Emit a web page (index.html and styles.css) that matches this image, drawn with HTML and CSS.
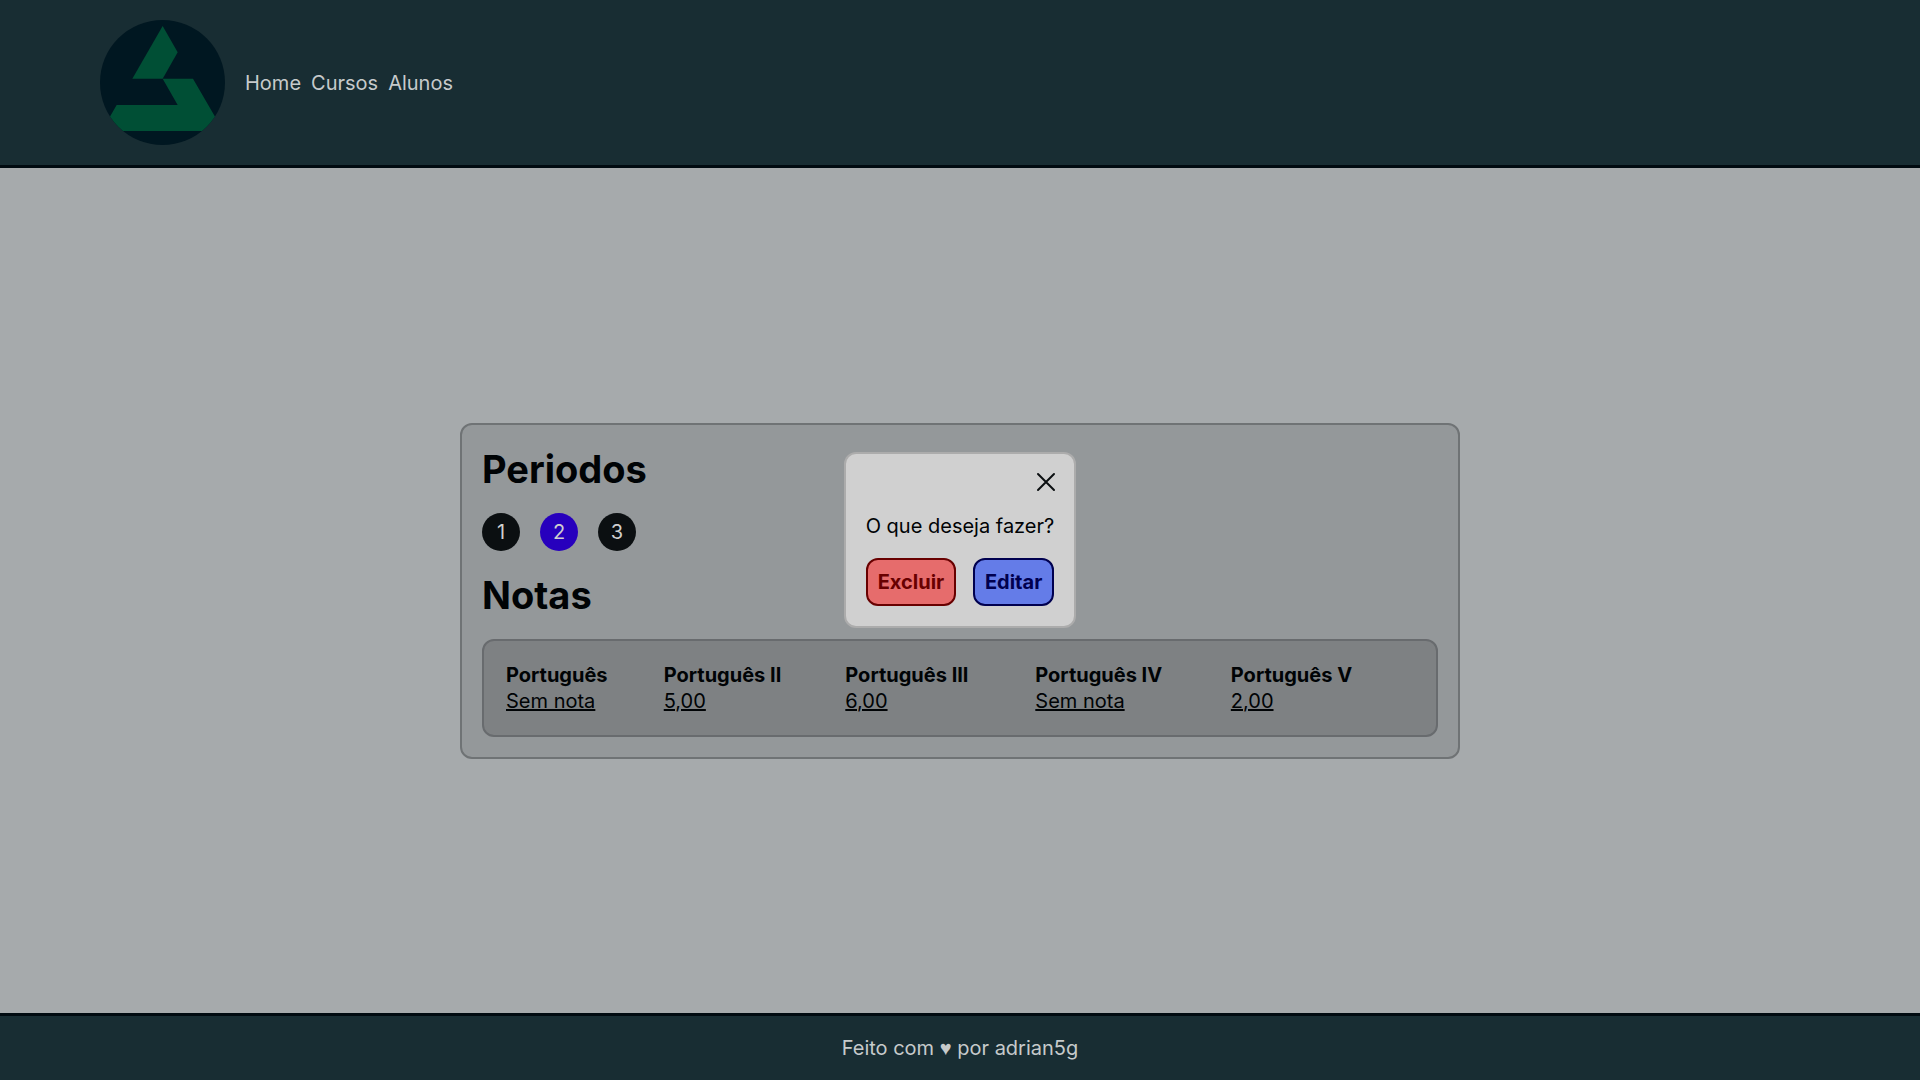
FILE: index.html
```html
<!DOCTYPE html>
<html lang="pt-BR">
<head>
  <meta charset="utf-8">
  <meta name="viewport" content="width=device-width, initial-scale=1">
  <title>Notas</title>
  <link rel="stylesheet" href="styles.css">
</head>
<body>
  <header class="header">
    <svg class="logo" viewBox="0 0 375 375" role="img" aria-label="Logo">
      <clipPath id="disc"><circle cx="187.5" cy="187.5" r="187.5"/></clipPath>
      <g clip-path="url(#disc)">
        <rect class="logo-disc" width="375" height="375"/>
        <polygon class="logo-mark" points="188,18 233,97 188,176 97,176"/>
        <polygon class="logo-mark" points="188,176 279,176 370,333 5,333 50,255 233,255"/>
      </g>
    </svg>
    <nav class="nav">
      <a href="#home">Home</a>
      <a href="#cursos">Cursos</a>
      <a href="#alunos">Alunos</a>
    </nav>
  </header>

  <main class="main">
    <section class="card">
      <h2 class="title">Periodos</h2>
      <div class="periods">
        <button class="period" type="button">1</button>
        <button class="period period-active" type="button">2</button>
        <button class="period" type="button">3</button>
      </div>
      <h2 class="title">Notas</h2>
      <div class="grades">
        <table class="grades-table">
          <thead>
            <tr>
              <th scope="col">Português</th>
              <th scope="col">Português II</th>
              <th scope="col">Português III</th>
              <th scope="col">Português IV</th>
              <th scope="col">Português V</th>
            </tr>
          </thead>
          <tbody>
            <tr>
              <td><a href="#nota-1">Sem nota</a></td>
              <td><a href="#nota-2">5,00</a></td>
              <td><a href="#nota-3">6,00</a></td>
              <td><a href="#nota-4">Sem nota</a></td>
              <td><a href="#nota-5">2,00</a></td>
            </tr>
          </tbody>
        </table>
      </div>
    </section>
  </main>

  <footer class="footer">Feito com <span class="heart">♥</span> por adrian5g</footer>

  <div class="overlay">
    <div class="dialog" role="dialog" aria-modal="true" aria-labelledby="question">
      <div class="dialog-head">
        <button class="close" type="button" aria-label="Fechar">
          <svg class="close-icon" viewBox="0 0 16 16" aria-hidden="true">
            <path d="M0 0 16 16M16 0 0 16"/>
          </svg>
        </button>
      </div>
      <p class="question" id="question">O que deseja fazer?</p>
      <div class="actions">
        <button class="action action-delete" type="button">Excluir</button>
        <button class="action action-edit" type="button">Editar</button>
      </div>
    </div>
  </div>
</body>
</html>
```

FILE: styles.css
```css
* {
  box-sizing: border-box;
  margin: 0;
  padding: 0;
}

body {
  display: flex;
  flex-direction: column;
  min-height: 100vh;
  background: #a6aaac;
  color: #000305;
  font-family: Inter, "Liberation Sans", sans-serif;
  font-size: 20px;
  font-weight: 400;
  line-height: 24px;
}

button {
  border: 0;
  font: inherit;
  cursor: pointer;
}

.header {
  display: flex;
  align-items: center;
  gap: 20px;
  padding: 20px 100px;
  background: #182d33;
  border-bottom: 3px solid #000a10;
}

.logo {
  width: 125px;
  height: 125px;
}

.logo-disc {
  fill: #001721;
}

.logo-mark {
  fill: #004f35;
}

.nav {
  display: flex;
  gap: 10px;
}

.nav a {
  color: #c6cacb;
  text-decoration: none;
}

.main {
  display: flex;
  flex: 1;
  align-items: center;
  justify-content: center;
}

.card {
  display: flex;
  flex-direction: column;
  gap: 20px;
  width: 100%;
  max-width: 1000px;
  padding: 20px;
  background: #94989a;
  border: 2px solid #6f7375;
  border-radius: 12px;
}

.title {
  font-size: 38px;
  font-weight: 700;
  line-height: 48px;
}

.periods {
  display: flex;
  gap: 20px;
}

.period {
  width: 38px;
  height: 38px;
  background: #0b0f11;
  border-radius: 50%;
  color: #cfcfcf;
}

.period-active {
  background: #2700bd;
}

.grades {
  padding: 21px 20px;
  background: #7e8183;
  border: 2px solid #686b6e;
  border-radius: 12px;
}

.grades-table {
  width: 100%;
  border-collapse: collapse;
  text-align: left;
}

.grades-table th,
.grades-table td {
  padding: 1px 2px;
}

.grades-table th {
  font-weight: 700;
}

.grades-table a {
  color: inherit;
}

.footer {
  padding: 20px;
  background: #182d33;
  border-top: 3px solid #000a10;
  color: #c6cacb;
  text-align: center;
}

.heart {
  font-family: "Liberation Sans", sans-serif;
}

.overlay {
  position: fixed;
  inset: 0;
  display: flex;
  align-items: center;
  justify-content: center;
}

.dialog {
  display: flex;
  flex-direction: column;
  gap: 20px;
  padding: 20px;
  background: #d0d0d0;
  border: 2px solid #acacac;
  border-radius: 12px;
}

.dialog-head {
  display: flex;
  justify-content: flex-end;
  height: 20px;
}

.close {
  width: 16px;
  height: 16px;
  background: none;
}

.close-icon {
  display: block;
  overflow: visible;
  fill: none;
  stroke: #0b0f11;
  stroke-width: 2;
  stroke-linecap: round;
}

.actions {
  display: flex;
  justify-content: space-between;
}

.action {
  padding: 10px;
  border: 2px solid;
  border-radius: 12px;
  font-weight: 700;
}

.action-delete {
  background: #e66c6c;
  border-color: #680000;
  color: #680000;
}

.action-edit {
  background: #647ce8;
  border-color: #00004f;
  color: #00004f;
}
```
